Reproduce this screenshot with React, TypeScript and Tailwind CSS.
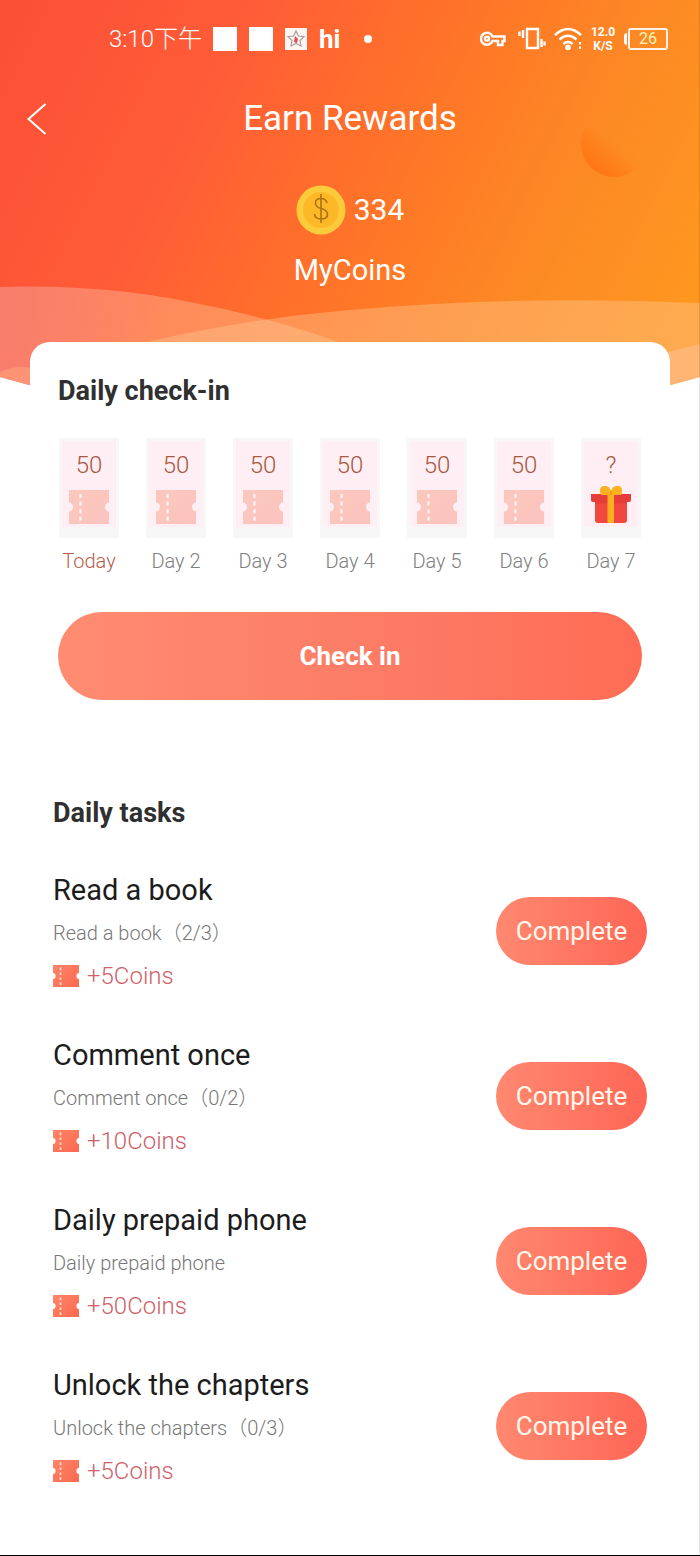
import React from 'react';

type Task = { title: string; detail: string; reward: string };

const days = ['Today', 'Day 2', 'Day 3', 'Day 4', 'Day 5', 'Day 6', 'Day 7'];

const tasks: Task[] = [
  { title: 'Read a book', detail: 'Read a book（2/3）', reward: '+5Coins' },
  { title: 'Comment once', detail: 'Comment once（0/2）', reward: '+10Coins' },
  { title: 'Daily prepaid phone', detail: 'Daily prepaid phone', reward: '+50Coins' },
  { title: 'Unlock the chapters', detail: 'Unlock the chapters（0/3）', reward: '+5Coins' },
];

function Backdrop() {
  return (
    <svg
      className="absolute inset-x-0 top-0 h-[390px] w-full"
      viewBox="0 0 700 390"
      preserveAspectRatio="none"
      aria-hidden="true"
    >
      <defs>
        <linearGradient id="sky" gradientUnits="userSpaceOnUse" x1="0" y1="60" x2="640" y2="380">
          <stop offset="0" stopColor="#fb5036" />
          <stop offset="0.28" stopColor="#ff5c38" />
          <stop offset="0.42" stopColor="#ff682e" />
          <stop offset="0.62" stopColor="#ff7a26" />
          <stop offset="0.8" stopColor="#fc8a24" />
          <stop offset="1" stopColor="#ff9620" />
        </linearGradient>
        <linearGradient id="moon" x1="0.2" y1="0.9" x2="0.75" y2="0.25">
          <stop offset="0" stopColor="#ff7414" stopOpacity="0.9" />
          <stop offset="0.35" stopColor="#ff7a18" stopOpacity="0.6" />
          <stop offset="0.65" stopColor="#ff8a22" stopOpacity="0" />
        </linearGradient>
        <linearGradient id="wave" x1="0" y1="0" x2="1" y2="0">
          <stop offset="0" stopColor="#f2a2a0" stopOpacity="0.5" />
          <stop offset="0.4" stopColor="#ffb285" stopOpacity="0.5" />
          <stop offset="1" stopColor="#ffc890" stopOpacity="0.45" />
        </linearGradient>
        <clipPath id="edge">
          <path d="M0 0H700V377Q520 428 350 428Q180 428 0 377Z" />
        </clipPath>
      </defs>
      <g clipPath="url(#edge)">
        <rect width="700" height="390" fill="url(#sky)" />
        <circle cx="614" cy="144" r="33" fill="url(#moon)" />
        <path d="M0 287Q100 284 190 302Q270 317 350 346L420 390H0Z" fill="url(#wave)" />
        <path d="M130 346Q240 319 350 310Q520 295 700 303V390H130Z" fill="#ffc591" fillOpacity="0.42" />
        <path d="M0 372Q18 363 40 370V390H0Z" fill="#ffa27c" fillOpacity="0.6" />
        <path d="M660 354L700 344V390H660Z" fill="#ffbf98" fillOpacity="0.5" />
      </g>
    </svg>
  );
}

function Ticket({ className, faded = false }: { className: string; faded?: boolean }) {
  const id = faded ? 'ticket-faded' : 'ticket-solid';
  return (
    <svg className={className} viewBox="0 0 40 34" preserveAspectRatio="none" aria-hidden="true">
      <defs>
        <linearGradient id={id} x1="0" y1="0" x2="1" y2="1">
          <stop offset="0" stopColor={faded ? '#fbc8bd' : '#ff8468'} />
          <stop offset="1" stopColor={faded ? '#fbc3bf' : '#fb6a50'} />
        </linearGradient>
      </defs>
      <path d="M0 0H40V12.500A4 4.500 0 0 0 40 21.500V34H0V21.500A4 4.500 0 0 0 0 12.500Z" fill={`url(#${id})`} />
      <path d="M11.5 4V31" stroke={faded ? '#fff0f2' : '#ffe3dc'} strokeWidth="2.4" strokeDasharray="4 3.6" />
    </svg>
  );
}

function Gift() {
  return (
    <svg className="h-[38px] w-10" viewBox="0 0 40 38" aria-hidden="true">
      <path d="M4 13H36V34Q36 37 33 37H7Q4 37 4 34Z" fill="#f0473f" />
      <path d="M0 8H40V14Q40 16 38 16H2Q0 16 0 14Z" fill="#e63c3a" />
      <path d="M4 16H36V17.500H4Z" fill="#cf3434" fillOpacity="0.4" />
      <path d="M16.500 8H23V37H16.500Z" fill="#ffae20" />
      <path d="M20 9H10Q7 2 12 0Q18 -1 20 5Q22 -1 28 0Q33 2 30 9Z" fill="#fdb022" />
      <path d="M20 5V9" stroke="#e98f16" strokeWidth="1.5" />
    </svg>
  );
}

function Coin() {
  return (
    <svg className="size-[50px]" viewBox="0 0 50 50" aria-hidden="true">
      <circle cx="25" cy="25" r="24.5" fill="#fccb3c" />
      <circle cx="25" cy="25" r="18" fill="#fdb827" />
      <path d="M25 9V38M31 18Q30 13.500 25 13.500Q19.500 13.500 19.500 18Q19.500 22 25 23.500Q31.500 25 31.500 29.500Q31.500 34 25 34Q19 34 18.500 29" fill="none" stroke="#ad7315" strokeWidth="1.6" />
    </svg>
  );
}

function StatusBar() {
  return (
    <div className="flex h-[78px] items-center justify-between pr-8 pl-[109px] text-white">
      <div className="flex items-center">
        <span className="w-[104px] text-2xl font-light whitespace-nowrap">3:10下午</span>
        <span className="mr-3 size-6 bg-white" />
        <span className="mr-3 size-6 bg-white" />
        <svg className="mr-3 size-[22px]" viewBox="0 0 22 22" aria-hidden="true">
          <rect width="22" height="22" fill="#fff5f3" />
          <path d="M11 3L13.400 8L19 8.700L15 12.500L16 18L11 15.400L6 18L7 12.500L3 8.700L8.600 8Z" fill="none" stroke="#a9a2a0" strokeWidth="1.200" />
          <path d="M10 8L13 11L12 15L9 14Z" fill="#e04a52" />
        </svg>
        <span className="mr-6 text-[26px] leading-8 font-bold">hi</span>
        <span className="size-2 rounded-full bg-white" />
      </div>
      <div className="flex items-center">
        <svg className="mr-3 h-4 w-[26px]" viewBox="0 0 26 16" fill="none" stroke="currentColor" strokeWidth="2.400" aria-hidden="true">
          <path d="M12.500 5.500H24.500V10H22.500V14H18V10H12.500A6 6 0 1 1 12.500 5.500Z" />
          <circle cx="7" cy="7.800" r="2" />
        </svg>
        <svg className="mr-2 h-6 w-7" viewBox="0 0 28 24" fill="none" stroke="currentColor" strokeWidth="2.400" aria-hidden="true">
          <path d="M9 2H20V21H9Z" />
          <path d="M5 3V11M1.500 4.500V9M23.500 12V20M26.500 14.500V18.500" />
        </svg>
        <svg className="mr-2 h-6 w-7" viewBox="0 0 28 24" fill="none" stroke="currentColor" strokeWidth="2.600" aria-hidden="true">
          <path d="M1 8Q14 -4 27 8M5.500 12.500Q14 5 22.500 12.500M9.500 17Q14 13 18.500 17" />
          <circle cx="14" cy="20.500" r="1.500" />
          <path d="M26 15V17.500M26 19.500V22" strokeWidth="2" />
        </svg>
        <span className="mr-2 w-[26px] text-center text-xs leading-[14px] font-bold">
          12.0
          <br />
          K/S
        </span>
        <span className="mr-px h-3 w-[3px] rounded-l bg-white" />
        <span className="flex h-[22px] w-10 items-center justify-center rounded-[3px] border-2 border-white/90 text-base leading-4 text-[#fff3b8]">26</span>
      </div>
    </div>
  );
}

export default function App() {
  return (
    <div className="relative min-h-screen border-b border-black bg-white font-[Roboto,'Noto_Sans_CJK_SC',sans-serif]">
      <Backdrop />
      <div className="relative">
        <StatusBar />
        <header className="text-center text-white">
          <div className="grid h-[82px] grid-cols-[1fr_auto_1fr] items-center">
            <button type="button" aria-label="Back" className="ml-[27px] w-5">
              <svg className="h-8 w-5" viewBox="0 0 20 32" fill="none" stroke="currentColor" strokeWidth="2" aria-hidden="true">
                <path d="M18.500 1L1.500 16L18.500 31" />
              </svg>
            </button>
            <h1 className="text-[35px] font-normal">Earn Rewards</h1>
          </div>
          <div className="mt-5 flex h-[60px] items-center justify-center gap-2 text-3xl">
            <Coin />
            <span>334</span>
          </div>
          <p className="h-[60px] text-[29px] leading-[60px]">MyCoins</p>
        </header>

        <section className="mx-[30px] mt-[42px] rounded-t-[20px] bg-white px-7 pt-[29px]">
          <h2 className="text-[27px] leading-10 font-bold text-[#303030]">Daily check-in</h2>
          <ol className="mt-[27px] flex justify-between px-px">
            {days.map((day, i) => (
              <li key={day} className="flex w-15 flex-col items-center">
                <div className="flex h-[100px] w-full flex-col items-center border-3 border-b-11 border-[#f8f7f8] bg-[#ffeef4] pt-2">
                  <span className="text-2xl leading-8 font-light text-[#a8583e]">{i === 6 ? '?' : '50'}</span>
                  <div className="mt-1 flex h-10 items-center">
                    {i === 6 ? <Gift /> : <Ticket faded className="mt-1 h-[34px] w-10" />}
                  </div>
                </div>
                <span className={i === 0 ? 'mt-[7px] text-xl leading-8 font-light whitespace-nowrap text-[#b5604a]' : 'mt-[7px] text-xl leading-8 font-light whitespace-nowrap text-[#808080]'}>
                  {day}
                </span>
              </li>
            ))}
          </ol>
          <button type="button" className="mt-[35px] h-[88px] w-full rounded-full bg-linear-to-r from-[#ff8c70] via-[#fc7d67] to-[#ff6c55] text-[26px] font-bold text-white">
            Check in
          </button>
        </section>

        <section className="mt-[93px] px-[53px] pb-10">
          <h2 className="text-[27px] leading-10 font-bold text-[#303030]">Daily tasks</h2>
          <ul className="mt-[35px] flex flex-col gap-[35px]">
            {tasks.map((task) => (
              <li key={task.title} className="flex items-start justify-between">
                <div>
                  <h3 className="text-[29px] leading-[44px] font-normal text-[#1c1c1c]">{task.title}</h3>
                  <p className="text-xl leading-[42px] font-light text-[#777777]">{task.detail}</p>
                  <p className="flex items-center gap-2 text-2xl leading-[44px] font-light text-[#cf5f68]">
                    <Ticket className="h-[22px] w-[26px]" />
                    {task.reward}
                  </p>
                </div>
                <button type="button" className="mt-[29px] h-[68px] w-[151px] rounded-full bg-linear-to-r from-[#ff8870] to-[#ff6555] text-[26px] text-[#fff8ec]">
                  Complete
                </button>
              </li>
            ))}
          </ul>
        </section>
      </div>
      <div className="pointer-events-none absolute inset-y-0 right-0 w-px bg-black/10" />
    </div>
  );
}
